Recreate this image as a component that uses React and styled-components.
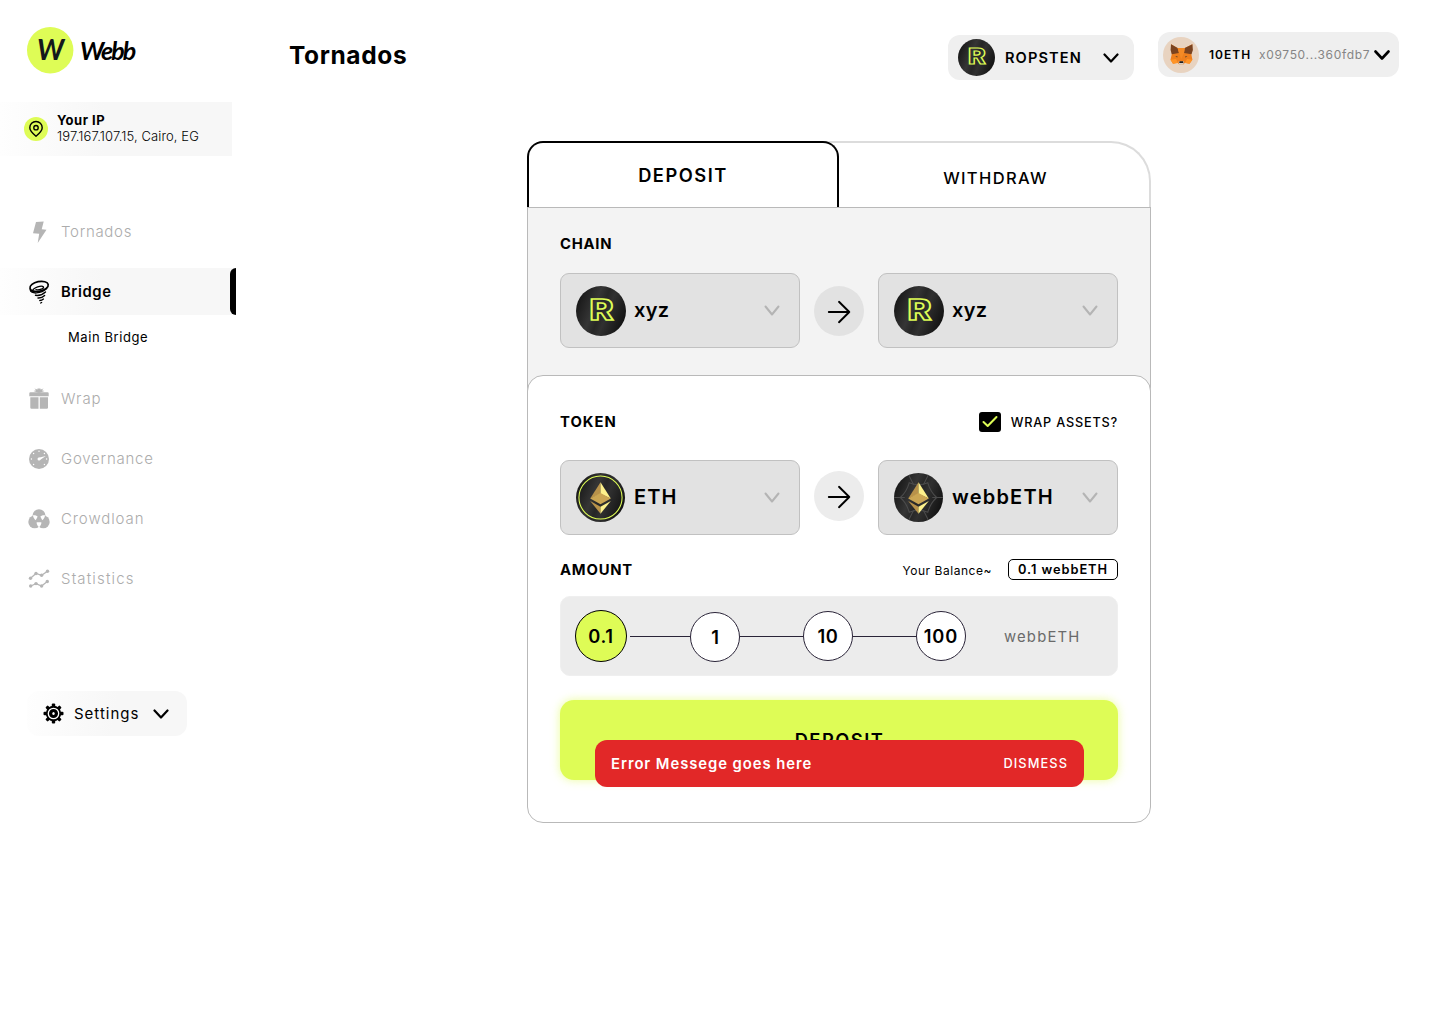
import React from "react";
import styled, { createGlobalStyle } from "styled-components";

const LIME = "#defc56";
const FADE = "linear-gradient(90deg, #fefefe 0%, #f7f7f7 45%, #f7f7f7 100%)";

const GlobalStyle = createGlobalStyle`
  *, *::before, *::after { box-sizing: border-box; }
  body { margin: 0; background: #fff; color: #000; font-family: Inter, "Liberation Sans", sans-serif; }
  svg { display: block; flex: none; }
`;

const Text = styled.span`
  display: block;
  flex: none;
  white-space: nowrap;
  font-size: ${(p) => p.$size}px;
  font-weight: ${(p) => p.$weight || 400};
  letter-spacing: ${(p) => p.$track || 0}px;
  line-height: ${(p) => p.$line || 20}px;
  color: ${(p) => p.$color || "#000"};
`;

const Page = styled.div`
  display: grid;
  grid-template-columns: 236px 1fr;
  height: 1024px;
  overflow: hidden;
`;

/* ---------- sidebar ---------- */
const Sidebar = styled.aside`
  padding-top: 27px;
`;
const Brand = styled.div`
  display: flex;
  align-items: center;
  gap: 6px;
  height: 46px;
  padding-left: 27px;
`;
const BrandName = styled(Text)`
  font-family: Lato, sans-serif;
  font-style: italic;
`;
const IpPanel = styled.section`
  display: flex;
  align-items: center;
  gap: 9px;
  width: 232px;
  height: 54px;
  margin-top: 29px;
  padding-left: 24px;
  background: ${FADE};
`;
const IpLines = styled.div`
  padding-bottom: 2px;
`;
const Nav = styled.nav`
  display: flex;
  flex-direction: column;
  gap: 13px;
  margin-top: 52px;
`;
const NavItem = styled.a`
  display: flex;
  align-items: center;
  gap: 9px;
  height: 47px;
  padding-left: 27px;
  background: ${(p) => (p.$active ? FADE : "none")};
`;
const ActiveRow = styled.div`
  display: grid;
  grid-template-columns: 230px 6px;
  background: #f7f7f7;
`;
const ActiveBar = styled.i`
  background: #000;
  border-radius: 6px 0 0 6px;
`;
const SubItem = styled.a`
  display: flex;
  align-items: center;
  height: 47px;
  padding: 0 0 3px 68px;
`;
const Settings = styled.button`
  display: flex;
  align-items: center;
  gap: 10px;
  width: 160px;
  height: 45px;
  margin: 89px 0 0 27px;
  padding: 0 0 0 16px;
  border: 0;
  border-radius: 12px;
  background: linear-gradient(100deg, #fefefe 0%, #f7f7f7 55%);
  font-family: inherit;
`;
const SettingsText = styled(Text)`
  width: 69px;
  text-align: left;
`;

/* ---------- header ---------- */
const Header = styled.header`
  display: flex;
  align-items: flex-start;
  height: 141px;
  padding: 32px 41px 0 53px;
`;
const Title = styled.h1`
  margin: 8px auto 0 0;
`;
const Pill = styled.button`
  display: flex;
  align-items: center;
  width: ${(p) => p.$width}px;
  height: 45px;
  margin: ${(p) => p.$drop || 0}px 0 0 ${(p) => p.$gap || 0}px;
  padding: 0 0 0 ${(p) => p.$inset}px;
  border: 0;
  border-radius: 12px;
  background: #efefef;
  font-family: inherit;
`;
const PillText = styled(Text)`
  width: ${(p) => p.$width}px;
  margin-left: ${(p) => p.$gap}px;
  text-align: left;
`;

/* ---------- card ---------- */
const Card = styled.section`
  width: 624px;
  margin-left: 291px;
`;
const Tabs = styled.div`
  display: flex;
  height: 66px;
`;
const DepositTab = styled.button`
  position: relative;
  z-index: 1;
  display: flex;
  justify-content: center;
  width: 312px;
  padding: 22px 0 0;
  border: 2px solid #000;
  border-bottom: 0;
  border-radius: 16px 16px 0 0;
  background: #fff;
  font-family: inherit;
`;
const WithdrawTab = styled.button`
  display: flex;
  justify-content: center;
  width: 332px;
  margin-left: -20px;
  padding: 25px 0 0 23px;
  border: solid #dcdcdc;
  border-width: 2px 2px 0 0;
  border-radius: 0 40px 0 0;
  background: #fff;
  font-family: inherit;
`;
const ChainPanel = styled.div`
  height: 184px;
  padding: 26px 32px 0;
  border: 1px solid #b9b9b9;
  border-bottom: 0;
  background: #f3f3f3;
`;
const TokenPanel = styled.div`
  position: relative;
  height: 448px;
  margin-top: -16px;
  padding: 36px 32px 0;
  border: 1px solid #b9b9b9;
  border-radius: 16px;
  background: #fff;
`;
const Row = styled.div`
  display: flex;
  align-items: center;
  justify-content: space-between;
  height: 20px;
`;
const Cluster = styled.div`
  display: flex;
  align-items: center;
  gap: ${(p) => p.$gap}px;
`;
const Swap = styled.div`
  display: grid;
  grid-template-columns: 240px 50px 240px;
  gap: 14px;
  margin-top: ${(p) => p.$top}px;
`;
const Select = styled.button`
  display: flex;
  align-items: center;
  height: 75px;
  padding: 0 19px 0 15px;
  border: 1px solid #c1c1c1;
  border-radius: 9px;
  background: #e2e2e2;
  font-family: inherit;
`;
const SelectText = styled(Text)`
  margin: 0 auto 0 8px;
  padding-bottom: 2px;
`;
const ArrowDisc = styled.div`
  width: 50px;
  height: 50px;
  margin-top: ${(p) => p.$top}px;
  border-radius: 50%;
  background: ${(p) => p.$fill};
`;
const CheckBox = styled.span`
  display: flex;
  align-items: center;
  justify-content: center;
  width: 22px;
  height: 20px;
  border-radius: 3px;
  background: #000;
`;
const WrapLabel = styled(Text)`
  padding-top: 1px;
`;
const AmountRow = styled(Row)`
  margin-top: 25px;
`;
const BalanceLabel = styled(Text)`
  padding-top: 2px;
`;
const Balance = styled.span`
  display: flex;
  justify-content: center;
  width: 110px;
  height: 21px;
  margin-bottom: 1px;
  border: 1px solid #000;
  border-radius: 5px;
`;
const AmountBox = styled.div`
  display: flex;
  align-items: flex-start;
  height: 80px;
  margin-top: 16px;
  padding: 13px 0 0 14px;
  border: 1px solid #efefef;
  border-radius: 10px;
  background: #ececec;
`;
const Stop = styled.button`
  display: flex;
  flex: none;
  align-items: center;
  justify-content: center;
  width: ${(p) => (p.$on ? 52 : 50)}px;
  height: ${(p) => (p.$on ? 52 : 50)}px;
  margin-top: ${(p) => p.$drop || 0}px;
  padding: 0 0 1px;
  border: 1px solid ${(p) => (p.$on ? "#000" : "#2a2438")};
  border-radius: 50%;
  background: ${(p) => (p.$on ? LIME : "#fff")};
  font-family: inherit;
`;
const Track = styled.i`
  width: ${(p) => p.$width}px;
  height: 1px;
  margin: 26px 0 0 ${(p) => p.$inset || 0}px;
  background: #2a2438;
`;
const Unit = styled(Text)`
  margin: 17px 0 0 38px;
`;
const Submit = styled.button`
  display: flex;
  justify-content: center;
  width: 100%;
  height: 80px;
  margin-top: 24px;
  padding: 30px 0 0 1px;
  border: 0;
  border-radius: 14px;
  background: ${LIME};
  box-shadow: 0 0 10px rgba(222, 252, 86, 0.6);
  font-family: inherit;
`;
const Toast = styled.div`
  position: absolute;
  left: 67px;
  top: 364px;
  display: flex;
  align-items: center;
  justify-content: space-between;
  width: 489px;
  height: 47px;
  padding: 0 16px;
  border-radius: 12px;
  background: #e22828;
`;

/* ---------- drawings ---------- */
const Chevron = ({ w = 14, h = 8, color = "#000", stroke = 2.2 }) => (
  <svg width={w + 2} height={h + 2} viewBox={`-1 -1 ${w + 2} ${h + 2}`} fill="none" stroke={color} strokeWidth={stroke} strokeLinecap="round" strokeLinejoin="round">
    <path d={`M0.500 0.500 L${w / 2} ${h - 0.5} L${w - 0.5} 0.500`} />
  </svg>
);

const LogoMark = () => (
  <svg width="47" height="47" viewBox="0 0 47 47">
    <circle cx="23.200" cy="23.200" r="23.200" fill={LIME} />
    <text x="23.600" y="33" textAnchor="middle" fontFamily="Lato, sans-serif" fontStyle="italic" fontWeight="700" fontSize="28" fill="#14181c">W</text>
  </svg>
);

const PinIcon = () => (
  <svg width="24" height="24" viewBox="0 0 24 24">
    <circle cx="12" cy="12" r="12" fill={LIME} />
    <g fill="none" stroke="#000" strokeWidth="1.400">
      <path d="M12 19.200C8.600 16.400 5.800 13.900 5.800 10.700a6.200 6.200 0 0 1 12.400 0c0 3.200-2.800 5.700-6.200 8.500z" strokeLinejoin="round" />
      <circle cx="12" cy="10.700" r="2.200" />
    </g>
  </svg>
);

const Glyph = ({ children, color = "#b5b5b5" }) => (
  <svg width="25" height="26" viewBox="0 0 25 26" fill={color} stroke="none">{children}</svg>
);
const BoltIcon = () => (
  <Glyph><path d="M9 3 16.700 2.500l-2 7.800 4.800.500L10.700 24l1.500-9.300-6.200-.400z" /></Glyph>
);
const TornadoIcon = () => (
  <Glyph color="none">
    <g stroke="#000" fill="none" strokeWidth="1.400" strokeLinecap="round">
      <ellipse cx="12.100" cy="7.400" rx="9.300" ry="4.800" strokeWidth="1.700" transform="rotate(-12 12.100 7.400)" />
      <path d="M5.400 12C6.500 8.400 14.800 6 16.400 7.900c1 1.700-4.400 3.500-7.400 2.700" />
      <path d="M3.200 10.500c0 4.900 11 4.500 16.500-.900" />
      <path d="M8.500 16.300c3.500.500 7.500-.900 10-3.300" />
      <path d="M11 19c2.500.200 4.900-.800 6.600-2.500" />
      <path d="M12.800 21.500c1.300 0 2.600-.500 3.600-1.400" />
      <path d="M13.700 24l.900-.500" />
    </g>
  </Glyph>
);
const GiftIcon = () => (
  <Glyph>
    <path d="M3.500 6.300h17q1.200 0 1.200 1v3h-19.400v-3q0-1 1.200-1zM3.300 11.300h8.200v11.500H4.500q-1.200 0-1.200-1zM12.800 11.300H21v10.500q0 1-1.200 1h-7z" />
    <path d="M12 7 6.500 5l2.600-.700-1.700-1.900 3 1 .6-1.600 1 1.400 1-1.400.6 1.600 3-1-1.700 1.900 2.600.700z" />
  </Glyph>
);
const GaugeIcon = () => (
  <Glyph>
    <circle cx="12" cy="13" r="10" />
    <g fill="#fff">
      <path d="M11.500 11.700 18.800 10l-6.200 4.200z" />
      <circle cx="12" cy="13" r="1.500" />
      {[[12, 5.2], [6.6, 7.5], [17.4, 7.5], [4.4, 13], [19.6, 13], [6.6, 18.5], [17.4, 18.5]].map(([x, y]) => (
        <circle key={`${x}-${y}`} cx={x} cy={y} r="0.700" />
      ))}
    </g>
  </Glyph>
);
const CrowdIcon = () => (
  <Glyph>
    <circle cx="12" cy="9.600" r="6.400" />
    <circle cx="7.700" cy="15.900" r="6.400" />
    <circle cx="16.300" cy="15.900" r="6.400" />
    <g fill="#fff">
      <path d="M6 9.300c2.500-.200 3.900.400 4.600 1.400L8.700 14.200C7.200 13 6.100 11.300 6 9.300z" />
      <path d="M18 9.300c-2.500-.200-3.900.400-4.600 1.400l1.900 3.500c1.500-1.200 2.600-2.900 2.700-4.900z" />
      <path d="M9.600 16.300h4.800c0 2.100-.900 3.700-2.400 5-1.500-1.300-2.400-2.900-2.400-5z" />
    </g>
  </Glyph>
);
const StatsIcon = () => {
  const lines = [[[3.5, 12.3], [9, 7.5], [14.6, 9.3], [20.5, 5.3]], [[3.7, 20], [9, 17.6], [14.6, 20], [20.3, 15.5]]];
  return (
    <Glyph>
      {lines.map((pts, i) => (
        <g key={i}>
          <polyline points={pts.join(" ")} fill="none" stroke="#b5b5b5" strokeWidth="1.300" />
          {pts.map(([x, y]) => <circle key={x} cx={x} cy={y} r="1.700" />)}
        </g>
      ))}
    </Glyph>
  );
};
const GearIcon = () => (
  <svg width="21" height="21" viewBox="-10.500 -10.500 21 21">
    {[0, 45, 90, 135, 180, 225, 270, 315].map((a) => (
      <rect key={a} x="-1.700" y="-10" width="3.400" height="5" rx="1" transform={`rotate(${a})`} />
    ))}
    <circle r="7.700" />
    <circle r="5.200" fill="none" stroke="#fff" strokeWidth="1.300" />
    <ellipse rx="1.200" ry="1.600" fill="#fff" />
  </svg>
);

const Coin = ({ size, view = 50, children }) => (
  <svg width={size} height={size} viewBox={`0 0 ${view} ${view}`}>
    <defs>
      <linearGradient id="coin" x1="0" y1="0.300" x2="1" y2="0.700">
        <stop offset="0" stopColor="#161616" />
        <stop offset="0.350" stopColor="#353535" />
        <stop offset="0.500" stopColor="#262626" />
        <stop offset="0.620" stopColor="#303030" />
        <stop offset="1" stopColor="#101010" />
      </linearGradient>
      <clipPath id="disc"><circle cx="25" cy="25" r="25" /></clipPath>
    </defs>
    <circle cx="25" cy="25" r="25" fill="url(#coin)" />
    {children}
  </svg>
);
const RopstenCoin = ({ size = 50 }) => (
  <Coin size={size}>
    <text x="13.500" y="34.200" textLength="24" lengthAdjust="spacingAndGlyphs" fontFamily="Inter, sans-serif" fontWeight="800" fontSize="29" fill="none" stroke={LIME} strokeWidth="1.600">R</text>
  </Coin>
);
const Diamond = () => (
  <g>
    <path d="M25 9.500 14.500 26 25 21.500z" fill="#b8924a" />
    <path d="M25 9.500 35.500 26 25 21.500z" fill="#fdf18b" />
    <path d="M25 20.500 14.500 26 25 32 35.500 26z" fill="#cba653" />
    <path d="M14.500 28.500 25 34.500V41.500z" fill="#b8924a" />
    <path d="M35.500 28.500 25 34.500V41.500z" fill="#fdf18b" />
  </g>
);
const EthCoin = () => (
  <Coin size={50} view={51}>
    <circle cx="25" cy="25" r="22" fill="none" stroke={LIME} strokeWidth="1.100" />
    <Diamond />
  </Coin>
);
const WebbEthCoin = () => (
  <Coin size={50} view={51}>
    <g clipPath="url(#disc)" fill="none" stroke="#4b4b4b" strokeWidth="1.100">
      <path d="M14 0 20 12M36 0 30 12M0 25h11M50 25H39M14 50l6-12M36 50l-6-12" />
      <path d="M15.500 10Q25 14 34.500 10Q37 19 43.500 25Q37 31 34.500 40Q25 36 15.500 40Q13 31 6.500 25Q13 19 15.500 10z" />
    </g>
    <Diamond />
  </Coin>
);
const FoxAvatar = () => (
  <svg width="36" height="36" viewBox="0 0 36 36">
    <circle cx="18" cy="18" r="18" fill="#e8d3c0" />
    <path d="M8 7.200 14.600 11h7.200L29.400 7.200 28.300 17l1.100 5.800-2.900 4-4.500-1-2 1.900h-3.500l-2-1.900-4.500 1-2.500-4L8.800 17z" fill="#ee7f1d" />
    <path d="M8 7.200 14.600 11 16 16 8.800 17.200 7.600 13zM29.400 7.200 21.800 11 21 16l7.500 1.200L29.900 13z" fill="#7a4320" />
    <path d="M14.600 11h7.200L21 16l-2.800 6L16 16z" fill="#f48a25" />
    <path d="M7.500 22.800 13 22l2 4-5 .8zM29.400 22.800 24 22l-2 4 4.500.8z" fill="#ff9426" />
    <path d="M15.500 24.500h5.500l-.8 3.200h-3.900z" fill="#d8cfc6" />
    <path d="M16.600 24.200h3.400l.4 1.800h-4.200z" fill="#1d1d1d" />
    <path d="M12.300 19.200l2.300.3-.4 1.100zM24.400 19.200l-2.300.3.4 1.100z" fill="#33312f" />
  </svg>
);
const Arrow = () => (
  <svg width="50" height="50" viewBox="0 0 50 50" fill="none" stroke="#000" strokeWidth="1.900" strokeLinecap="round" strokeLinejoin="round">
    <path d="M14.800 26H35.300M25 15.800 35.300 26 25 36.200" />
  </svg>
);

/* ---------- composed parts ---------- */
const NavText = ({ track, children }) => <Text $size={15} $weight={300} $color="#acacac" $track={track}>{children}</Text>;
const Heading = ({ track, children }) => <Text $size={14.8} $weight={700} $track={track}>{children}</Text>;

const TokenSelect = ({ icon, label, track }) => (
  <Select>
    {icon}
    <SelectText $size={20} $weight={600} $track={track} $line={26}>{label}</SelectText>
    <Chevron w={14} h={9} color="#b4b4b4" stroke={2} />
  </Select>
);

export default function App() {
  return (
    <>
      <GlobalStyle />
      <Page>
        <Sidebar>
          <Brand>
            <LogoMark />
            <BrandName $size={25} $weight={700} $line={46} $track={-1.9}>Webb</BrandName>
          </Brand>
          <IpPanel>
            <PinIcon />
            <IpLines>
              <Text $size={13} $weight={700} $line={16} $track={0.5}>Your IP</Text>
              <Text $size={13} $weight={300} $line={16} $track={0.1}>197.167.107.15, Cairo, EG</Text>
            </IpLines>
          </IpPanel>
          <Nav>
            <NavItem><BoltIcon /><NavText track={0.7}>Tornados</NavText></NavItem>
            <div>
              <ActiveRow>
                <NavItem $active><TornadoIcon /><Text $size={14.8} $weight={600} $track={0.6}>Bridge</Text></NavItem>
                <ActiveBar />
              </ActiveRow>
              <SubItem><Text $size={13} $track={0.58}>Main Bridge</Text></SubItem>
            </div>
            <NavItem><GiftIcon /><NavText track={1}>Wrap</NavText></NavItem>
            <NavItem><GaugeIcon /><NavText track={0.77}>Governance</NavText></NavItem>
            <NavItem><CrowdIcon /><NavText track={0.9}>Crowdloan</NavText></NavItem>
            <NavItem><StatsIcon /><NavText track={1.15}>Statistics</NavText></NavItem>
          </Nav>
          <Settings>
            <GearIcon />
            <SettingsText $size={15} $track={1}>Settings</SettingsText>
            <Chevron />
          </Settings>
        </Sidebar>
        <main>
          <Header>
            <Title><Text $size={24.5} $weight={700} $line={30} $track={0.62}>Tornados</Text></Title>
            <Pill $width={186} $drop={3} $inset={10}>
              <RopstenCoin size={37} />
              <PillText $size={14.6} $weight={600} $track={1.1} $gap={10} $width={98}>ROPSTEN</PillText>
              <Chevron />
            </Pill>
            <Pill $width={241} $gap={24} $inset={5}>
              <FoxAvatar />
              <PillText $size={12} $weight={600} $track={1} $gap={10} $width={42}>10ETH</PillText>
              <PillText $size={12} $color="#858585" $track={0.66} $gap={8} $width={115}>x09750...360fdb7</PillText>
              <Chevron stroke={2.6} />
            </Pill>
          </Header>
          <Card>
            <Tabs>
              <DepositTab><Text $size={18.3} $weight={600} $track={1.5}>DEPOSIT</Text></DepositTab>
              <WithdrawTab><Text $size={16.5} $weight={500} $track={1.35}>WITHDRAW</Text></WithdrawTab>
            </Tabs>
            <ChainPanel>
              <Row><Heading track={0.75}>CHAIN</Heading></Row>
              <Swap $top={19}>
                <TokenSelect icon={<RopstenCoin />} label="xyz" track={0.3} />
                <ArrowDisc $top={13} $fill="#e2e2e2"><Arrow /></ArrowDisc>
                <TokenSelect icon={<RopstenCoin />} label="xyz" track={0.3} />
              </Swap>
            </ChainPanel>
            <TokenPanel>
              <Row>
                <Heading track={1}>TOKEN</Heading>
                <Cluster $gap={10}>
                  <CheckBox>
                    <svg width="16" height="14" viewBox="0 0 16 14" fill="none" stroke={LIME} strokeWidth="2" strokeLinecap="round" strokeLinejoin="round"><path d="M1.500 7l4.200 4L14.500 2" /></svg>
                  </CheckBox>
                  <WrapLabel $size={12.7} $weight={500} $track={0.8}>WRAP ASSETS?</WrapLabel>
                </Cluster>
              </Row>
              <Swap $top={28}>
                <TokenSelect icon={<EthCoin />} label="ETH" track={1.1} />
                <ArrowDisc $top={11} $fill="#ececec"><Arrow /></ArrowDisc>
                <TokenSelect icon={<WebbEthCoin />} label="webbETH" track={1.2} />
              </Swap>
              <AmountRow>
                <Heading track={0.8}>AMOUNT</Heading>
                <Cluster $gap={16}>
                  <BalanceLabel $size={12} $track={0.54}>Your Balance~</BalanceLabel>
                  <Balance><Text $size={12.8} $weight={600} $track={0.95} $line={19}>0.1 webbETH</Text></Balance>
                </Cluster>
              </AmountRow>
              <AmountBox>
                <Stop $on><Text $size={18.3} $weight={600} $track={0.7}>0.1</Text></Stop>
                <Track $width={60} $inset={3} />
                <Stop $drop={2}><Text $size={18.3} $weight={600}>1</Text></Stop>
                <Track $width={63} />
                <Stop $drop={1}><Text $size={18.3} $weight={600} $track={0.6}>10</Text></Stop>
                <Track $width={63} />
                <Stop $drop={1}><Text $size={18.3} $weight={600} $track={0.9}>100</Text></Stop>
                <Unit $size={14.8} $color="#6a6a6a" $track={1.2}>webbETH</Unit>
              </AmountBox>
              <Submit><Text $size={18.3} $weight={600} $track={1.5}>DEPOSIT</Text></Submit>
              <Toast>
                <Text $size={14.8} $weight={600} $color="#fff" $track={0.95}>Error Messege goes here</Text>
                <Text $size={12.8} $weight={500} $color="#fff" $track={1.1}>DISMESS</Text>
              </Toast>
            </TokenPanel>
          </Card>
        </main>
      </Page>
    </>
  );
}
